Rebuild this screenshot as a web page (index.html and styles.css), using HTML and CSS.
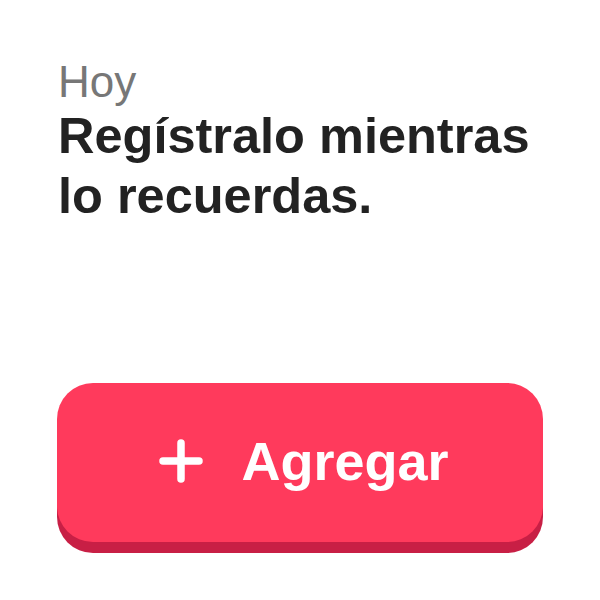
FILE: index.html
```html
<!DOCTYPE html>
<html lang="es">
  <head>
    <meta charset="utf-8" />
    <meta name="viewport" content="width=device-width, initial-scale=1" />
    <title>Hoy</title>
    <link rel="stylesheet" href="styles.css">
  </head>
  <body>
    <main class="today">
      <p class="eyebrow">Hoy</p>
      <h1 class="headline">Regístralo mientras lo recuerdas.</h1>

      <button class="add-button" type="button">
        <svg class="add-icon" viewBox="0 0 44 44" aria-hidden="true">
          <path d="M22 4v36M4 22h36" />
        </svg>
        <span>Agregar</span>
      </button>
    </main>
  </body>
</html>
```

FILE: styles.css
```css
*,
*::before,
*::after {
  box-sizing: border-box;
  margin: 0;
}

html,
body {
  min-height: 100%;
}

body {
  background: #fff;
  color: #222;
  font-family: "Liberation Sans", Arial, sans-serif;
  min-height: 600px;
}

.today {
  display: flex;
  flex-direction: column;
  padding: 57px 57px 58px 58px;
}

.eyebrow {
  color: #777;
  font-size: 44px;
  line-height: 49px;
}

.headline {
  font-size: 50.5px;
  font-weight: 700;
  line-height: 60px;
  max-width: 490px;
}

.add-button {
  align-items: center;
  background: #ff3a5c;
  border: 0;
  border-radius: 36px;
  box-shadow: 0 11px 0 #c81f45;
  color: #fff;
  cursor: pointer;
  display: flex;
  flex-shrink: 0;
  font-family: inherit;
  font-size: 54px;
  font-weight: 700;
  gap: 38px;
  height: 159px;
  justify-content: center;
  margin: 157px 0 0 -1px;
  padding: 0 0 4px 8px;
  width: 486px;
}

.add-icon {
  fill: none;
  height: 44px;
  stroke: #fff;
  stroke-linecap: round;
  stroke-width: 7.5;
  width: 44px;
}
```
